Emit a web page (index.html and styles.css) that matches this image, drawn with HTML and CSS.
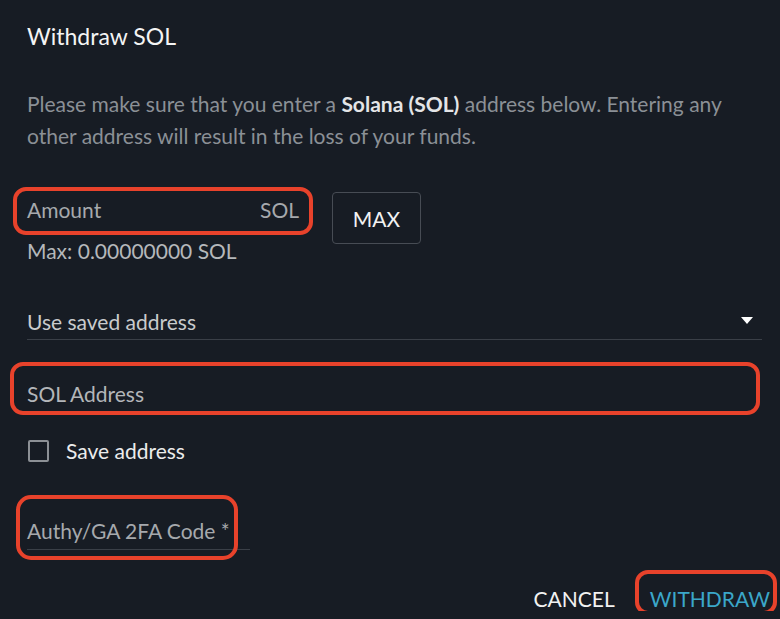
FILE: index.html
```html
<!DOCTYPE html>
<html lang="en">
<head>
    <meta charset="UTF-8">
    <meta name="viewport" content="width=device-width, initial-scale=1.0">
    <title>Withdraw SOL</title>
    <link rel="stylesheet" href="styles.css">
</head>
<body>
    <div class="dialog">
        <h2 class="dialog-title">Withdraw SOL</h2>

        <p class="notice">Please make sure that you enter a <strong>Solana (SOL)</strong> address below. Entering any other address will result in the loss of your funds.</p>

        <!-- Amount with max button -->
        <div class="amount-row">
            <div class="amount-col">
                <div class="field field-amount">
                    <span class="field-label">Amount</span>
                    <span class="field-suffix">SOL</span>
                    <span class="mark mark-amount"></span>
                </div>
                <div class="hint">Max: 0.00000000 SOL</div>
            </div>
            <button class="btn-outline">MAX</button>
        </div>

        <div class="select">
            <span>Use saved address</span>
            <svg class="caret" width="12" height="7" viewBox="0 0 12 7"><path d="M0 0h12L6 7z" fill="#ffffff"/></svg>
        </div>

        <div class="field field-address">
            <span class="field-label">SOL Address</span>
            <span class="mark mark-address"></span>
        </div>

        <label class="check">
            <span class="check-box"></span>
            <span>Save address</span>
        </label>

        <div class="field field-2fa">
            <span class="field-label">Authy/GA 2FA Code *</span>
            <span class="mark mark-2fa"></span>
        </div>

        <div class="actions">
            <button class="btn-text">CANCEL</button>
            <button class="btn-text btn-primary">WITHDRAW<span class="mark mark-withdraw"></span></button>
        </div>
    </div>
</body>
</html>
```

FILE: styles.css
```css
body {
    margin: 0;
    background: #171c24;
    font-family: Lato, "Open Sans", sans-serif;
    color: #f2f2f2;
}

.dialog {
    padding: 21px 18px 0 27px;
}

.dialog-title {
    margin: 0;
    font-size: 23px;
    line-height: 30px;
    font-weight: 400;
    color: #f4f4f4;
}

.notice {
    margin: 37px 0 0;
    font-size: 21px;
    line-height: 32px;
    color: #8b9096;
}

.notice strong {
    color: #e4e5e7;
    font-weight: 700;
}

.amount-row {
    display: flex;
    align-items: flex-start;
    gap: 33px;
    margin-top: 40px;
}

.amount-col {
    width: 272px;
}

.field {
    position: relative;
    font-size: 21px;
    line-height: 24px;
    color: #a6a9ad;
}

.field-amount {
    display: flex;
    justify-content: space-between;
    padding: 6px 0 10px;
}

.hint {
    margin-top: 7px;
    font-size: 21px;
    line-height: 24px;
    color: #b5b8bb;
}

.btn-outline {
    width: 89px;
    height: 52px;
    background: transparent;
    border: 1px solid #474c54;
    border-radius: 4px;
    color: #f2f2f2;
    font-family: inherit;
    font-size: 21px;
}

.select {
    display: flex;
    justify-content: space-between;
    align-items: center;
    margin-top: 47px;
    padding-bottom: 5px;
    border-bottom: 1px solid #3a3f47;
    font-size: 21px;
    line-height: 24px;
    color: #c9cbcd;
}

.caret {
    margin-right: 9px;
    margin-top: -4px;
}

.field-address {
    margin-top: 42px;
    color: #b3b6b9;
}

.check {
    display: flex;
    align-items: center;
    gap: 17px;
    margin-top: 33px;
    font-size: 21px;
    line-height: 24px;
    color: #ececec;
}

.check-box {
    width: 17px;
    height: 18px;
    margin-left: 1px;
    border: 2px solid #8c9095;
    border-radius: 2px;
}

.field-2fa {
    width: 223px;
    margin-top: 56px;
    padding-bottom: 6px;
    border-bottom: 1px solid #3a3f47;
}

.actions {
    display: flex;
    justify-content: flex-end;
    gap: 35px;
    margin: 37px -8px 0 0;
}

.btn-text {
    position: relative;
    padding: 0;
    background: none;
    border: none;
    font-family: inherit;
    font-size: 21px;
    line-height: 24px;
    color: #f2f2f2;
}

.btn-primary {
    color: #3ba7c9;
}

/* red annotation outlines */
.mark {
    position: absolute;
    border: 4px solid #e8422b;
    border-radius: 13px;
    pointer-events: none;
}

.mark-amount {
    top: -5px;
    left: -14px;
    right: -14px;
    bottom: -3px;
}

.mark-address {
    top: -20px;
    left: -17px;
    right: 2px;
    bottom: -9px;
}

.mark-2fa {
    top: -24px;
    left: -11px;
    right: 12px;
    bottom: -11px;
    border-radius: 15px;
}

.mark-withdraw {
    top: -17px;
    left: -15px;
    right: -7px;
    bottom: -4px;
}
```
